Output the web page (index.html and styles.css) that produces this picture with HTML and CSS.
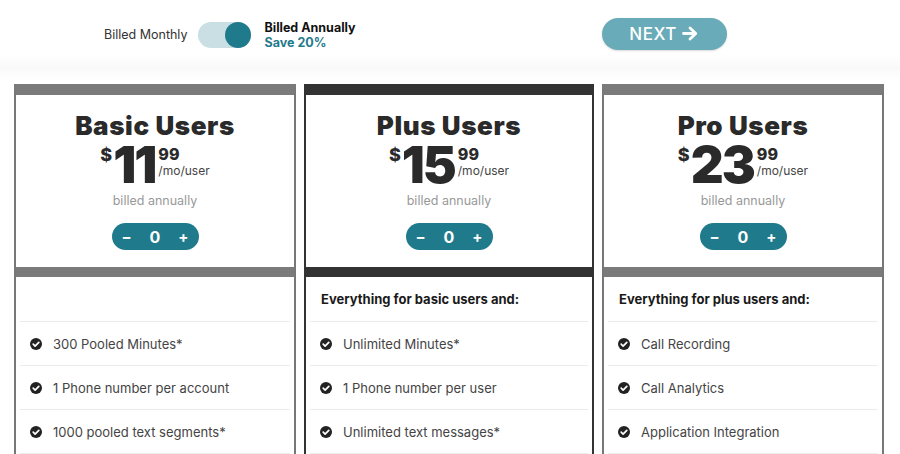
FILE: index.html
```html
<!DOCTYPE html>
<html lang="en">
<head>
  <meta charset="UTF-8">
  <title>Pricing</title>
  <link rel="stylesheet" href="styles.css">
</head>
<body>
  <div class="billing-bar">
    <span class="billing-label">Billed Monthly</span>
    <span class="toggle"><span class="toggle-knob"></span></span>
    <div class="billing-annual">
      <span class="annual-label">Billed Annually</span>
      <span class="annual-save">Save 20%</span>
    </div>
    <button class="next-btn">NEXT
      <svg width="17" height="15" viewBox="0 0 17 15"><path d="M1.5 7.5h12M8 2l5.8 5.5L8 13" fill="none" stroke="#fff" stroke-width="2.8" stroke-linecap="round" stroke-linejoin="round"/></svg>
    </button>
  </div>

  <main class="plans">
    <div class="plan">
      <div class="plan-head">
        <h2>Basic Users</h2>
        <div class="price"><span class="cur">$</span><span class="whole">11</span><span class="tail"><span class="cents">99</span><span class="unit">/mo/user</span></span></div>
        <p class="billed">billed annually</p>
        <div class="counter"><span>&minus;</span><span class="count">0</span><span>+</span></div>
      </div>
      <ul class="features">
        <li class="features-title"></li>
        <li><svg class="check" viewBox="0 0 12 12"><circle cx="6" cy="6" r="6"/><path d="M3.2 6.2l1.9 1.9 3.7-3.8"/></svg>300 Pooled Minutes*</li>
        <li><svg class="check" viewBox="0 0 12 12"><circle cx="6" cy="6" r="6"/><path d="M3.2 6.2l1.9 1.9 3.7-3.8"/></svg>1 Phone number per account</li>
        <li><svg class="check" viewBox="0 0 12 12"><circle cx="6" cy="6" r="6"/><path d="M3.2 6.2l1.9 1.9 3.7-3.8"/></svg>1000 pooled text segments*</li>
      </ul>
    </div>

    <div class="plan plan-featured">
      <div class="plan-head">
        <h2>Plus Users</h2>
        <div class="price"><span class="cur">$</span><span class="whole">15</span><span class="tail"><span class="cents">99</span><span class="unit">/mo/user</span></span></div>
        <p class="billed">billed annually</p>
        <div class="counter"><span>&minus;</span><span class="count">0</span><span>+</span></div>
      </div>
      <ul class="features">
        <li class="features-title">Everything for basic users and:</li>
        <li><svg class="check" viewBox="0 0 12 12"><circle cx="6" cy="6" r="6"/><path d="M3.2 6.2l1.9 1.9 3.7-3.8"/></svg>Unlimited Minutes*</li>
        <li><svg class="check" viewBox="0 0 12 12"><circle cx="6" cy="6" r="6"/><path d="M3.2 6.2l1.9 1.9 3.7-3.8"/></svg>1 Phone number per user</li>
        <li><svg class="check" viewBox="0 0 12 12"><circle cx="6" cy="6" r="6"/><path d="M3.2 6.2l1.9 1.9 3.7-3.8"/></svg>Unlimited text messages*</li>
      </ul>
    </div>

    <div class="plan">
      <div class="plan-head">
        <h2>Pro Users</h2>
        <div class="price"><span class="cur">$</span><span class="whole">23</span><span class="tail"><span class="cents">99</span><span class="unit">/mo/user</span></span></div>
        <p class="billed">billed annually</p>
        <div class="counter"><span>&minus;</span><span class="count">0</span><span>+</span></div>
      </div>
      <ul class="features">
        <li class="features-title">Everything for plus users and:</li>
        <li><svg class="check" viewBox="0 0 12 12"><circle cx="6" cy="6" r="6"/><path d="M3.2 6.2l1.9 1.9 3.7-3.8"/></svg>Call Recording</li>
        <li><svg class="check" viewBox="0 0 12 12"><circle cx="6" cy="6" r="6"/><path d="M3.2 6.2l1.9 1.9 3.7-3.8"/></svg>Call Analytics</li>
        <li><svg class="check" viewBox="0 0 12 12"><circle cx="6" cy="6" r="6"/><path d="M3.2 6.2l1.9 1.9 3.7-3.8"/></svg>Application Integration</li>
      </ul>
    </div>
  </main>
</body>
</html>
```

FILE: styles.css
```css
body {
  margin: 0;
  font-family: 'Inter', 'Open Sans', sans-serif;
  color: #222;
  background-color: #fff;
  overflow: hidden;
}

.billing-bar {
  display: flex;
  align-items: center;
  height: 68px;
  padding-left: 104px;
  padding-bottom: 2px;
  padding-top: 3px;
  box-sizing: border-box;
  background: linear-gradient(to bottom, #fff 0, #fff 54px, #f9f9f9 100%);
}

.billing-label {
  font-size: 12.5px;
  color: #333;
}

.toggle {
  display: flex;
  justify-content: flex-end;
  align-items: center;
  width: 53px;
  height: 26px;
  margin-left: 11px;
  border-radius: 13px;
  background-color: #c9dfe4;
}

.toggle-knob {
  width: 26px;
  height: 26px;
  border-radius: 50%;
  background-color: #1f7a8c;
}

.billing-annual {
  display: flex;
  flex-direction: column;
  margin-left: 13px;
  line-height: 15px;
  font-size: 12.5px;
  font-weight: 700;
}

.annual-label {
  color: #111;
}

.annual-save {
  color: #1f7a8c;
}

.next-btn {
  display: flex;
  align-items: center;
  gap: 5px;
  margin-left: 246px;
  margin-top: -2px;
  width: 125px;
  height: 32px;
  justify-content: center;
  border: none;
  border-radius: 16px;
  background-color: #69abb8;
  color: #fff;
  font-family: inherit;
  font-size: 17px;
  font-weight: 500;
  letter-spacing: 0.5px;
  box-shadow: 0 1px 2px rgba(0, 0, 0, 0.15);
}

.plans {
  display: grid;
  grid-template-columns: 282px 290px 282px;
  gap: 8px;
  padding: 16px 14px 0;
  background: linear-gradient(to bottom, #f9f9f9 0, #fff 12px);
}

.plan {
  border: 2px solid #777;
  border-top: 11px solid #7b7b7b;
  border-bottom: none;
  background-color: #fff;
}

.plan-featured {
  border-color: #333;
}

.plan-head {
  display: flex;
  flex-direction: column;
  align-items: center;
  height: 182px;
  padding-top: 18px;
  box-sizing: border-box;
  border-bottom: 10px solid #7b7b7b;
}

.plan-featured .plan-head {
  border-bottom-color: #333;
}

.plan-head h2 {
  margin: 0;
  font-size: 26px;
  font-weight: 900;
  line-height: 26px;
  letter-spacing: 0.6px;
  color: #2a2a2a;
}

.price {
  display: flex;
  align-items: flex-start;
  margin-top: 6px;
  height: 40px;
  color: #2a2a2a;
}

.cur {
  font-size: 18px;
  font-weight: 800;
  line-height: 18px;
  margin-top: 1px;
  margin-right: 1px;
}

.whole {
  font-size: 51px;
  font-weight: 900;
  line-height: 40px;
  letter-spacing: -2px;
  margin-right: 3px;
}

.tail {
  display: flex;
  flex-direction: column;
  line-height: 14px;
}

.cents {
  font-size: 16px;
  font-weight: 800;
  line-height: 18px;
}

.unit {
  margin-top: 1px;
  font-size: 12px;
  font-weight: 400;
  color: #444;
}

.billed {
  margin: 8px 0 0;
  font-size: 12.5px;
  color: #999;
}

.counter {
  display: flex;
  align-items: center;
  justify-content: space-between;
  width: 87px;
  height: 27px;
  margin-top: 15px;
  padding: 0 10px;
  box-sizing: border-box;
  border-radius: 14px;
  background-color: #1f7a8c;
  color: #fff;
  font-size: 15px;
  font-weight: 700;
}

.counter .count {
  font-size: 16px;
}

.features {
  list-style: none;
  margin: 0;
  padding: 0 4px;
}

.features li {
  display: flex;
  align-items: center;
  height: 44px;
  padding-left: 10px;
  box-sizing: border-box;
  border-bottom: 1px solid #ececec;
  font-size: 13px;
  color: #444;
}

.features .features-title {
  height: 45px;
  padding-left: 11px;
  font-weight: 700;
  color: #1a1a1a;
}

.check {
  width: 12px;
  height: 12px;
  margin-right: 11px;
  flex-shrink: 0;
}

.check circle {
  fill: #222;
}

.check path {
  fill: none;
  stroke: #fff;
  stroke-width: 1.7;
  stroke-linecap: round;
  stroke-linejoin: round;
}
```
